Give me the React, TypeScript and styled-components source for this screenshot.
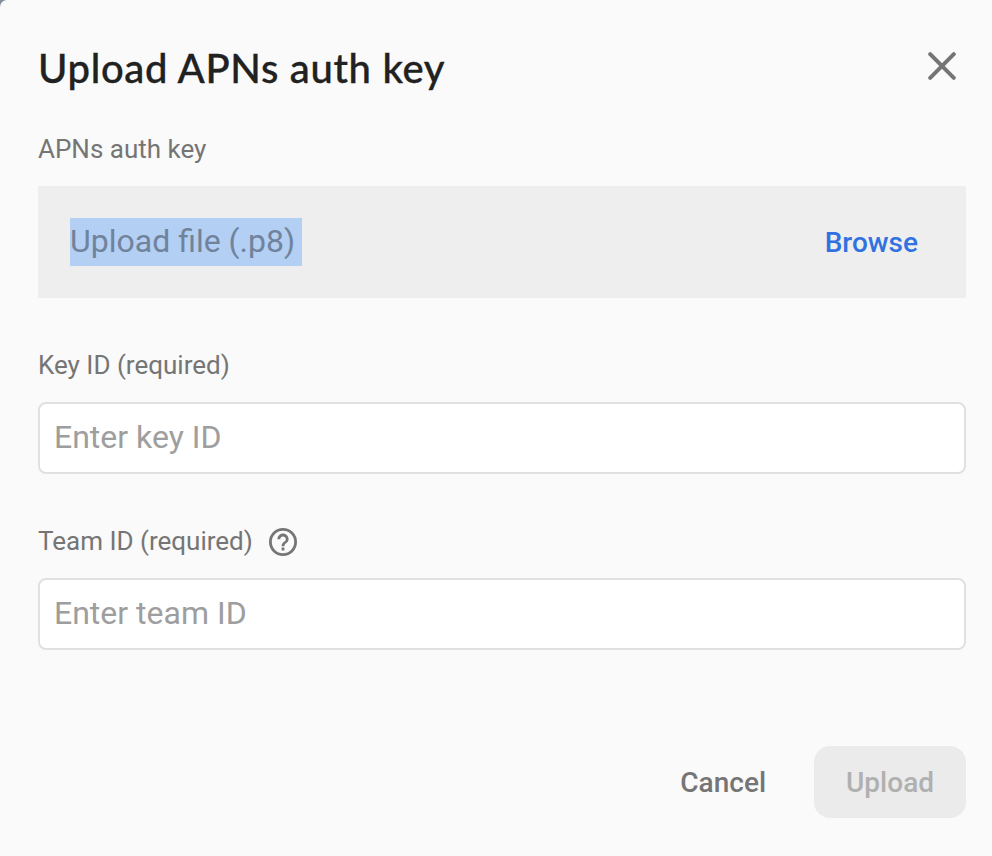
import React from 'react';
import styled, { createGlobalStyle } from 'styled-components';

const Global = createGlobalStyle`
  *{box-sizing:border-box}
  body{margin:0;background:#848e98;font-family:Roboto,sans-serif}
`;
const Dialog = styled.main`
  height:856px;padding:38px 26px 38px 38px;background:#fafafa;
  display:flex;flex-direction:column;border-top-left-radius:7px;
`;
const Header = styled.header`display:flex;justify-content:space-between;align-items:flex-start;height:90px;`;
const Title = styled.h1`
  margin:0;font:500 40px/60px Lato,sans-serif;letter-spacing:.66px;color:#212121;white-space:nowrap;
  -webkit-text-stroke:.35px #212121;
`;
const IconButton = styled.button`border:0;background:none;padding:0;margin:14px 10px 0 0;display:flex;`;
const Label = styled.label`
  display:flex;align-items:center;gap:16px;height:42px;font-size:26px;line-height:42px;color:#757575;white-space:nowrap;
`;
const HelpIcon = styled.svg`margin-top:2px;`;
const Drop = styled.section`
  display:flex;justify-content:space-between;align-items:center;height:112px;margin:16px 0 46px;
  padding:0 48px 0 32px;background:#eee;
`;
const Selected = styled.span`
  height:48px;width:232px;background:#b3cff4;color:#70839b;font-size:32px;line-height:46px;white-space:nowrap;
`;
const Browse = styled.button`
  border:0;background:none;padding:2px 0 0;color:#3272e0;font:500 28px/40px Roboto,sans-serif;
`;
const Field = styled.input`
  height:72px;width:100%;margin:16px 0 46px;padding:0 14px 2px;border:2px solid #e0e0e0;border-radius:8px;
  background:#fff;font:400 32px Roboto,sans-serif;outline:0;
  &::placeholder{color:#9e9e9e;opacity:1}
`;
const Footer = styled.footer`display:flex;justify-content:flex-end;gap:16px;margin-top:auto;`;
const Action = styled.button<{ $filled?: boolean }>`
  height:72px;border:0;border-radius:16px;padding:2px 32px 0;font:500 28px/70px Roboto,sans-serif;
  background:${p => (p.$filled ? '#ebebeb' : 'transparent')};color:${p => (p.$filled ? '#b0b0b0' : '#757575')};
`;

export default function App() {
  return (
    <>
      <Global />
      <Dialog>
        <Header>
          <Title>Upload APNs auth key</Title>
          <IconButton aria-label="Close">
            <svg width="28" height="28" viewBox="0 0 28 28" fill="none" stroke="#757575" strokeWidth="4" strokeLinecap="round"><path d="M2.2 2.2 25.800 25.800M25.800 2.200 2.200 25.800" /></svg>
          </IconButton>
        </Header>
        <Label as="div">APNs auth key</Label>
        <Drop>
          <Selected>Upload file (.p8)</Selected>
          <Browse>Browse</Browse>
        </Drop>
        <Label htmlFor="key">Key ID (required)</Label>
        <Field id="key" placeholder="Enter key ID" />
        <Label htmlFor="team">
          Team ID (required)
          <HelpIcon width="28" height="28" viewBox="2 2 20 20" fill="#757575"><path d="M11 16h2v2h-2zM12 2a10 10 0 1 0 0 20 10 10 0 0 0 0-20zm0 18a8 8 0 1 1 0-16 8 8 0 0 1 0 16zm0-14c-2.210 0-4 1.790-4 4h2c0-1.100.9-2 2-2s2 .9 2 2c0 2-3 1.750-3 5h2c0-2.250 3-2.500 3-5 0-2.210-1.790-4-4-4z" /></HelpIcon>
        </Label>
        <Field id="team" placeholder="Enter team ID" />
        <Footer>
          <Action>Cancel</Action>
          <Action $filled>Upload</Action>
        </Footer>
      </Dialog>
    </>
  );
}
